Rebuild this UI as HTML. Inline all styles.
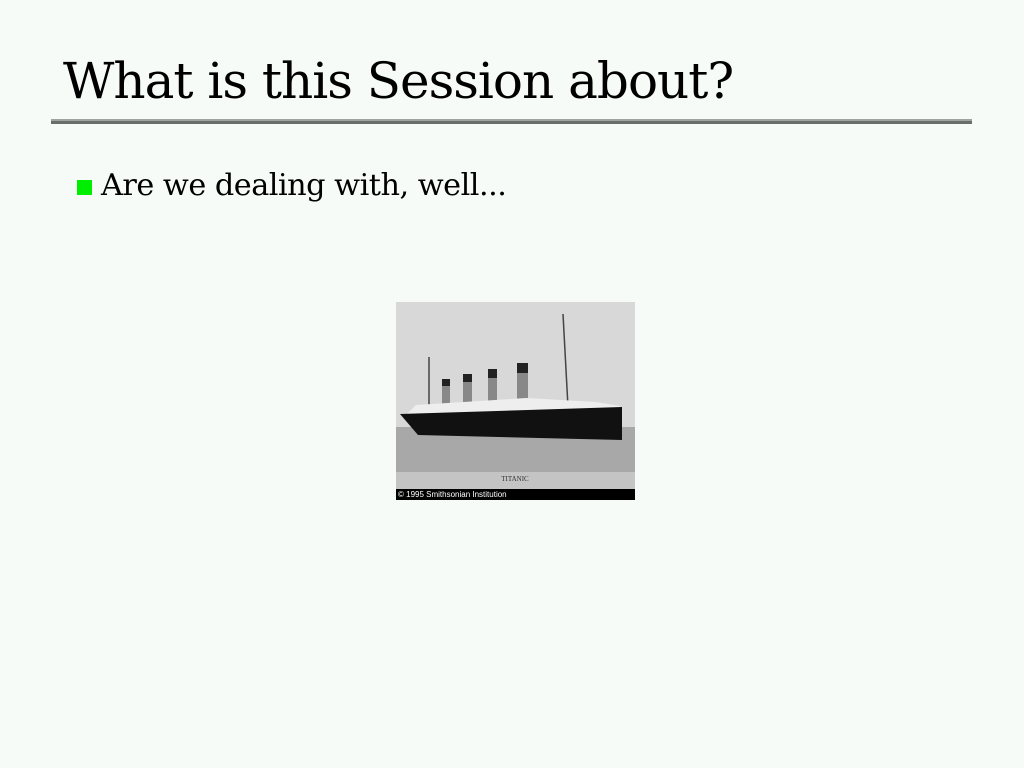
<!DOCTYPE html>
<html><head><meta charset="utf-8"><style>
html,body{margin:0;padding:0;width:1024px;height:768px;background:#f7fbf7;overflow:hidden;position:relative;font-family:"DejaVu Serif","Liberation Serif",serif;}
.t{position:absolute;left:63px;top:52px;font-size:50px;color:#000;white-space:nowrap;letter-spacing:-1px;}
.r1{position:absolute;left:51px;top:119px;width:921px;height:2px;background:#a0a4a0;}
.r2{position:absolute;left:51px;top:121px;width:921px;height:3px;background:#6a6e6a;}
.b{position:absolute;left:77px;top:180px;width:15px;height:15px;background:#00ee00;}
.x{position:absolute;left:101px;top:168px;font-size:30px;white-space:nowrap;letter-spacing:-0.5px;transform:scaleX(1.01);transform-origin:left;}
.img{position:absolute;left:396px;top:302px;width:239px;height:198px;background:#d0d0d0;overflow:hidden;}
.cap{position:absolute;left:0;bottom:0;width:100%;height:11px;background:#000;color:#fff;font:8px "Liberation Sans",sans-serif;line-height:11px;padding-left:2px;box-sizing:border-box;}
</style></head><body>
<div class="t">What is this Session about?</div>
<div class="r1"></div><div class="r2"></div>
<div class="b"></div>
<div class="x">Are we dealing with, well...</div>
<div class="img">
<svg width="239" height="198" viewBox="0 0 239 198">
<rect x="0" y="0" width="239" height="125" fill="#d8d8d8"/>
<rect x="0" y="125" width="239" height="45" fill="#a8a8a8"/>
<rect x="0" y="170" width="239" height="17" fill="#c4c4c4"/>
<line x1="33" y1="55" x2="33" y2="105" stroke="#444" stroke-width="1.5"/>
<line x1="167" y1="12" x2="172" y2="105" stroke="#444" stroke-width="1.5"/>
<rect x="46" y="77" width="8" height="25" fill="#888"/><rect x="46" y="77" width="8" height="7" fill="#222"/>
<rect x="67" y="72" width="9" height="30" fill="#888"/><rect x="67" y="72" width="9" height="8" fill="#222"/>
<rect x="92" y="67" width="9" height="35" fill="#888"/><rect x="92" y="67" width="9" height="9" fill="#222"/>
<rect x="121" y="61" width="11" height="42" fill="#888"/><rect x="121" y="61" width="11" height="10" fill="#222"/>
<polygon points="20,103 130,96 200,100 224,104 224,115 8,115" fill="#eee"/>
<polygon points="4,112 226,105 226,138 22,133" fill="#111"/>
<text x="119" y="179" font-size="7" text-anchor="middle" fill="#333" font-family="Liberation Serif">TITANIC</text>
</svg>
<div class="cap">© 1995 Smithsonian Institution</div>
</div>
</body></html>
